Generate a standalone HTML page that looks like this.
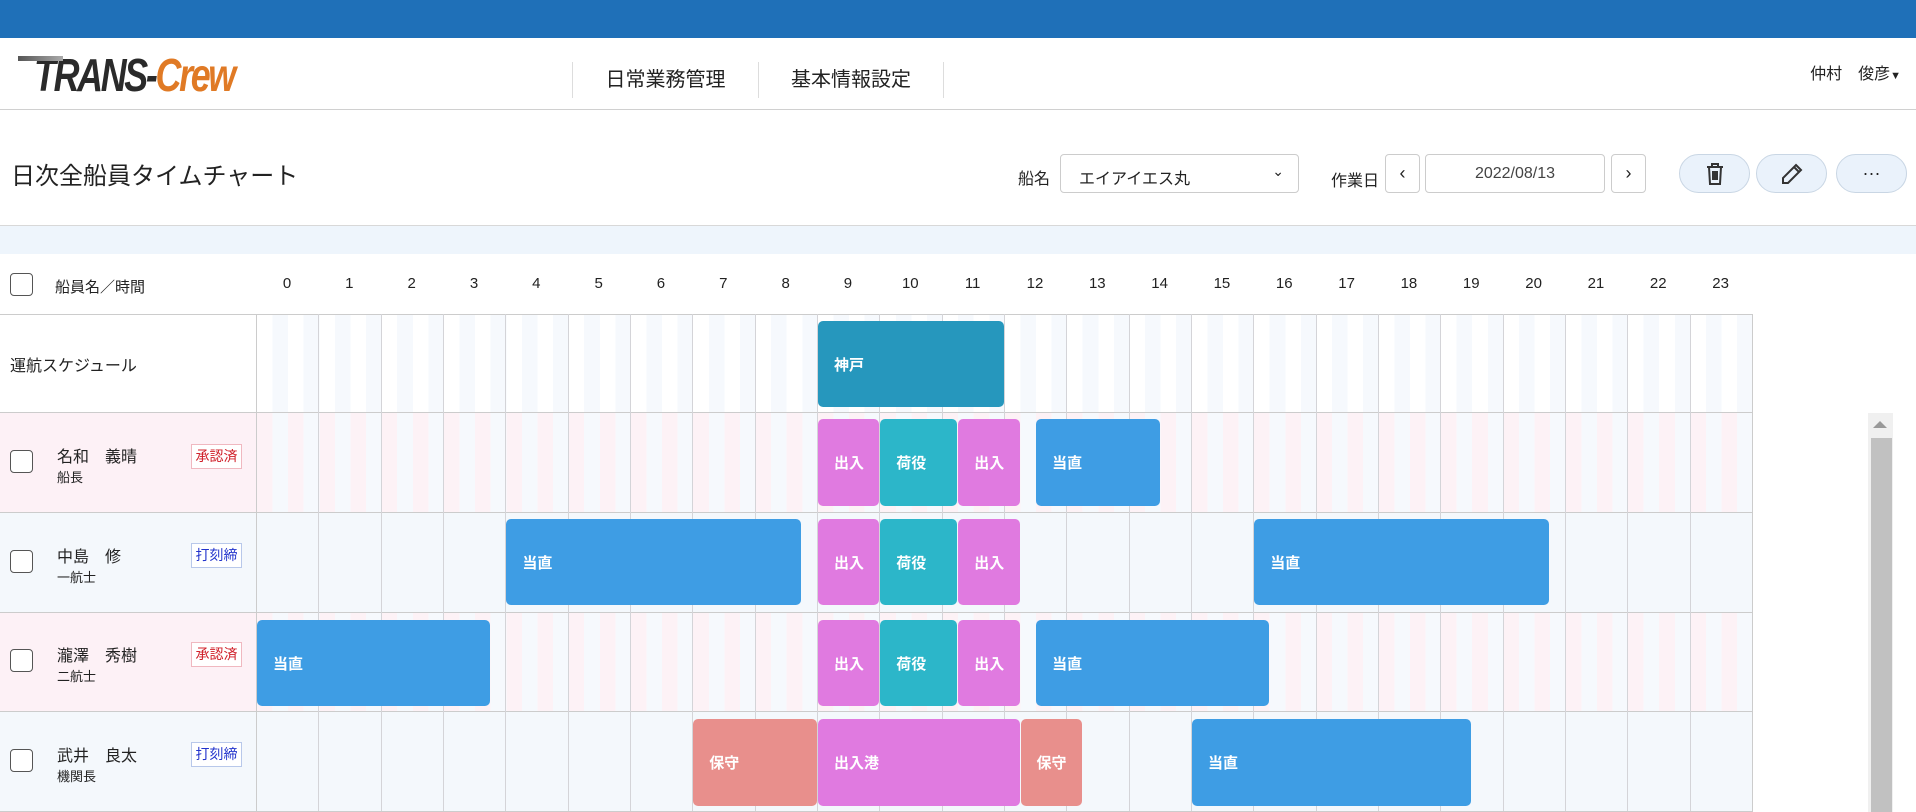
<!DOCTYPE html>
<html><head><meta charset="utf-8"><style>
*{margin:0;padding:0;box-sizing:border-box}
body{width:1916px;height:812px;overflow:hidden;background:#fff;font-family:"Liberation Sans","Noto Sans CJK JP",sans-serif;color:#222;position:relative}
.a{position:absolute}
.top{left:0;top:0;width:1916px;height:38px;background:#1f70b8}
.hdr{left:0;top:38px;width:1916px;height:72px;border-bottom:1px solid #d0d0d0}
.nav{top:62px;height:36px;border-left:1px solid #ddd;font-size:20px;line-height:36px;text-align:center}
.box{border:1px solid #ccc;border-radius:4px;background:#fff}
.pill{border:1px solid #c9d6e4;border-radius:20px;background:#eaf2fb;top:154px;height:39px;width:71px;display:flex;align-items:center;justify-content:center}
.band{left:0;top:225px;width:1916px;height:29px;background:#eef5fc;border-top:1px solid #d8d8d8}
.hr{font-size:15px;top:275px;width:62px;text-align:center}
.row{left:0;width:1753px;border-top:1px solid #ccc}
.grid{left:256px;width:1497px;border-left:1px solid #ccc;border-right:1px solid #ccc}
.cb{width:23px;height:23px;border:1px solid #555;border-radius:4px;background:#fff;left:10px}
.nm{left:57px;font-size:16px}
.rl{left:57px;font-size:13px}
.bd{left:191px;width:51px;height:25px;font-size:14px;text-align:center;line-height:23px}
.red{color:#d0202a;border:1px solid #f0b8c0;background:#fff}
.blu{color:#2233cc;border:1px solid #b8c8ea;background:#fff}
.bar{border-radius:5px;color:#fff;font-weight:bold;font-size:15px;padding-left:16px;display:flex;align-items:center}
.pk{background:#e07ae0}.tl{background:#2cb6c9}.bl{background:#3e9de4}.sm{background:#e88f8c}
</style></head><body>
<div class="a top"></div>
<div class="a hdr"></div>
<div class="a" style="left:34px;top:52px;font-size:46px;font-weight:bold;font-style:italic;letter-spacing:-3px;transform:scaleX(0.78);transform-origin:left;line-height:46px"><span style="color:#2a2a2a">TRANS-</span><span style="color:#e07a25">Crew</span></div>
<div class="a" style="left:18px;top:56px;width:45px;height:5px;background:linear-gradient(90deg,#555,#aaa)"></div>

<div class="a nav" style="left:572px;width:186px">日常業務管理</div>
<div class="a nav" style="left:758px;width:186px;border-right:1px solid #ddd">基本情報設定</div>
<div class="a" style="right:15px;top:60px;font-size:16px">仲村　俊彦<span style="font-size:11px">▼</span></div>

<div class="a" style="left:11px;top:156px;font-size:24px">日次全船員タイムチャート</div>
<div class="a" style="left:1018px;top:165px;font-size:16px">船名</div>
<div class="a box" style="left:1060px;top:154px;width:239px;height:39px;font-size:16px;padding:10px 18px">エイアイエス丸<span style="position:absolute;right:14px;top:8px;font-size:14px">⌄</span></div>
<div class="a" style="left:1331px;top:167px;font-size:16px">作業日</div>
<div class="a box" style="left:1385px;top:154px;width:35px;height:39px;text-align:center;line-height:37px;font-size:18px">‹</div>
<div class="a box" style="left:1425px;top:154px;width:180px;height:39px;text-align:center;line-height:37px;font-size:16px;color:#444">2022/08/13</div>
<div class="a box" style="left:1611px;top:154px;width:35px;height:39px;text-align:center;line-height:37px;font-size:18px">›</div>
<div class="a pill" style="left:1679px"><svg width="20" height="24" viewBox="0 0 20 24" fill="none" stroke="#333" stroke-width="2"><path d="M2 5h16M7 5V2h6v3M4 5l1 17h10l1-17M8 9v9M10 9v9M12 9v9"/></svg></div>
<div class="a pill" style="left:1756px"><svg width="24" height="24" viewBox="0 0 24 24" fill="none" stroke="#333" stroke-width="2"><path d="M16 3l5 5L8 21H3v-5zM14 5l5 5"/></svg></div>
<div class="a pill" style="left:1836px;font-size:18px">···</div>

<div class="a band"></div>
<div class="a cb" style="top:273px"></div>
<div class="a" style="left:55px;top:276px;font-size:15px">船員名／時間</div>
<div id="hrs"></div>

<div class="a row" style="top:314px;height:98px;background:#fff"></div>
<div class="a grid" style="top:315px;height:97px;background:repeating-linear-gradient(90deg,#fff 0 15.58px,#f6f9fd 15.58px 31.16px)"></div>
<div class="a" style="left:10px;top:352px;font-size:16px">運航スケジュール</div>

<div class="a row" style="top:412px;height:100px;background:#fdf1f6"></div>
<div class="a grid" style="top:413px;height:99px;background:repeating-linear-gradient(90deg,#fdf2f6 0 15.58px,#f6f9fd 15.58px 31.16px)"></div>
<div class="a row" style="top:512px;height:100px;background:#f4f8fc"></div>
<div class="a grid" style="top:513px;height:99px;background:#f4f8fc"></div>
<div class="a row" style="top:612px;height:99px;background:#fdf1f6"></div>
<div class="a grid" style="top:613px;height:98px;background:repeating-linear-gradient(90deg,#fdf2f6 0 15.58px,#f6f9fd 15.58px 31.16px)"></div>
<div class="a row" style="top:711px;height:101px;background:#f4f8fc;border-bottom:1px solid #ccc"></div>
<div class="a grid" style="top:712px;height:99px;background:#f4f8fc"></div>
<div id="vl"></div>

<div class="a cb" style="top:450px"></div><div class="a nm" style="top:443px">名和　義晴</div><div class="a rl" style="top:467px">船長</div><div class="a bd red" style="top:444px">承認済</div>
<div class="a cb" style="top:550px"></div><div class="a nm" style="top:543px">中島　修</div><div class="a rl" style="top:567px">一航士</div><div class="a bd blu" style="top:543px">打刻締</div>
<div class="a cb" style="top:649px"></div><div class="a nm" style="top:642px">瀧澤　秀樹</div><div class="a rl" style="top:666px">二航士</div><div class="a bd red" style="top:642px">承認済</div>
<div class="a cb" style="top:749px"></div><div class="a nm" style="top:742px">武井　良太</div><div class="a rl" style="top:766px">機関長</div><div class="a bd blu" style="top:742px">打刻締</div>

<div id="bars"></div>

<div class="a" style="left:1868px;top:413px;width:25px;height:399px;background:#f0f0f0"></div>
<div class="a" style="left:1873px;top:421px;width:0;height:0;border-left:7px solid transparent;border-right:7px solid transparent;border-bottom:7px solid #999"></div>
<div class="a" style="left:1871px;top:438px;width:21px;height:374px;background:#c1c1c1"></div>

<script>
var L=256,W=62.33,h='';
for(var i=0;i<24;i++)h+='<div class="a hr" style="left:'+(L+i*W)+'px">'+i+'</div>';
document.getElementById('hrs').innerHTML=h;
var v='';for(var i=1;i<24;i++)v+='<div class="a" style="left:'+Math.round(L+i*W)+'px;top:314px;width:1px;height:497px;background:#d4d4d8"></div>';
document.getElementById('vl').innerHTML=v;
var B=[[9,12,321,86,'神戸','background:#2697bd'],
[9,10,419,87,'出入','pk'],[10,11.25,419,87,'荷役','tl'],[11.25,12.25,419,87,'出入','pk'],[12.5,14.5,419,87,'当直','bl'],
[4,8.75,519,86,'当直','bl'],[9,10,519,86,'出入','pk'],[10,11.25,519,86,'荷役','tl'],[11.25,12.25,519,86,'出入','pk'],[16,20.75,519,86,'当直','bl'],
[0,3.75,620,86,'当直','bl'],[9,10,620,86,'出入','pk'],[10,11.25,620,86,'荷役','tl'],[11.25,12.25,620,86,'出入','pk'],[12.5,16.25,620,86,'当直','bl'],
[7,9,719,87,'保守','sm'],[9,12.25,719,87,'出入港','pk'],[12.25,13.25,719,87,'保守','sm'],[15,19.5,719,87,'当直','bl']];
var b='';B.forEach(function(x){var l=L+x[0]*W+1,w=(x[1]-x[0])*W-1;var c=x[5].indexOf(':')>0?'" style="'+x[5]+';':' '+x[5]+'" style="';
b+='<div class="a bar'+c+'left:'+l+'px;width:'+w+'px;top:'+x[2]+'px;height:'+x[3]+'px">'+x[4]+'</div>';});
document.getElementById('bars').innerHTML=b;
</script>
</body></html>
